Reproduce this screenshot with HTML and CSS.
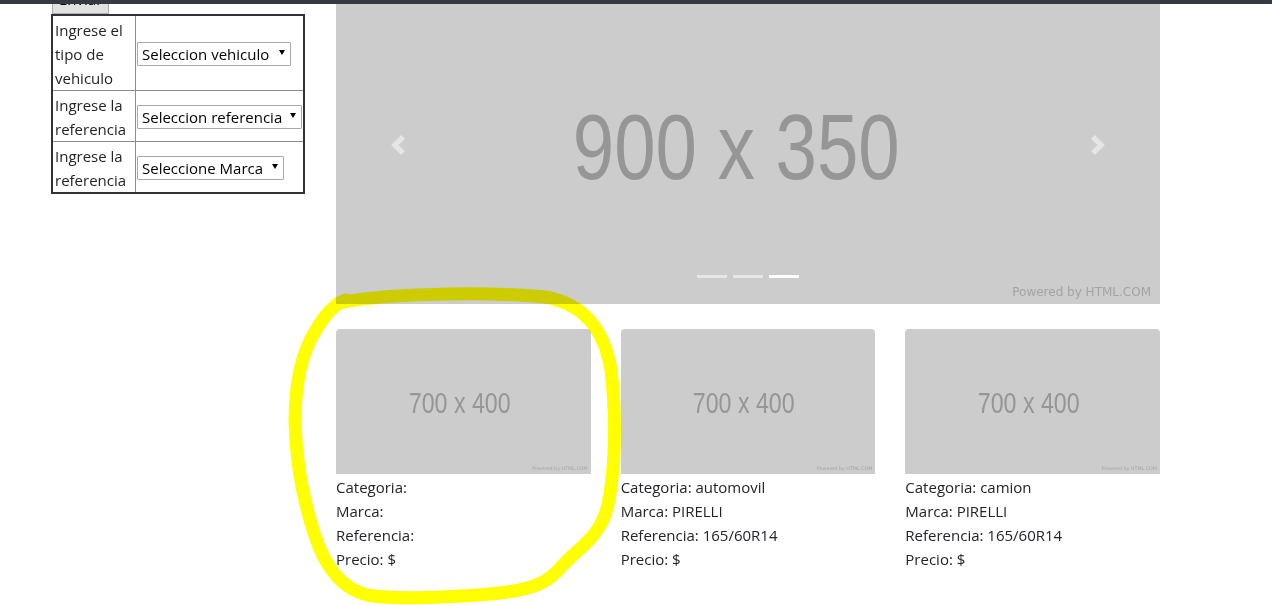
FILE: index.html
```html
<!DOCTYPE html>
<html>
<head>
    <title>Llantas</title>
    <link rel="stylesheet" href="styles.css">
</head>

<body>
    <div class="topbar"></div>

    <div class="page">
        <div class="side">
            <button type="button" class="send">Enviar</button>
            <table class="filters">
                <tr class="row-tall">
                    <td class="label">Ingrese el tipo de vehiculo</td>
                    <td><span class="pick"><select class="pick-vehiculo"><option>Seleccion vehiculo</option></select></span></td>
                </tr>
                <tr>
                    <td class="label">Ingrese la referencia</td>
                    <td><span class="pick"><select class="pick-referencia"><option>Seleccion referencia</option></select></span></td>
                </tr>
                <tr>
                    <td class="label">Ingrese la referencia</td>
                    <td><span class="pick"><select class="pick-marca"><option>Seleccione Marca</option></select></span></td>
                </tr>
            </table>
        </div>

        <div class="main">
            <div class="carousel">
                <div class="slide">
                    <span class="slide-text">900 x 350</span>
                    <span class="powered">Powered by HTML.COM</span>
                </div>
                <a class="control control-prev" href="#">
                    <svg width="20" height="20" viewBox="0 0 8 8"><path d="M5.25 0l-4 4 4 4 1.5-1.5-2.5-2.5 2.5-2.5-1.5-1.5z" fill="#fff"/></svg>
                </a>
                <a class="control control-next" href="#">
                    <svg width="20" height="20" viewBox="0 0 8 8"><path d="M2.75 0l-1.5 1.5 2.5 2.5-2.5 2.5 1.5 1.5 4-4-4-4z" fill="#fff"/></svg>
                </a>
                <ol class="indicators">
                    <li></li>
                    <li></li>
                    <li class="active"></li>
                </ol>
            </div>

            <div class="cards">
                <div class="card">
                    <div class="thumb">
                        <span class="thumb-text">700 x 400</span>
                        <span class="thumb-powered">Powered by HTML.COM</span>
                    </div>
                    <p>Categoria: </p>
                    <p>Marca: </p>
                    <p>Referencia: </p>
                    <p>Precio: $</p>
                </div>
                <div class="card">
                    <div class="thumb">
                        <span class="thumb-text">700 x 400</span>
                        <span class="thumb-powered">Powered by HTML.COM</span>
                    </div>
                    <p>Categoria: automovil</p>
                    <p>Marca: PIRELLI</p>
                    <p>Referencia: 165/60R14</p>
                    <p>Precio: $</p>
                </div>
                <div class="card">
                    <div class="thumb">
                        <span class="thumb-text">700 x 400</span>
                        <span class="thumb-powered">Powered by HTML.COM</span>
                    </div>
                    <p>Categoria: camion</p>
                    <p>Marca: PIRELLI</p>
                    <p>Referencia: 165/60R14</p>
                    <p>Precio: $</p>
                </div>
            </div>
        </div>
    </div>

    <!-- highlighter mark drawn over the first card -->
    <svg class="marker" width="1272" height="606" viewBox="0 0 1272 606">
        <path d="M338 303 C380 294 480 291 545 297 C585 304 604 330 611 370 C617 420 615 480 606 512 C598 538 576 550 562 566 C550 580 538 590 490 594 C440 598 395 600 367 595 C342 589 325 566 315 536 C303 500 296 462 295 422 C295 382 303 350 316 330 C325 314 333 306 345 300"
              fill="none" stroke="#ffff00" stroke-width="13" stroke-linecap="round" stroke-linejoin="round"/>
    </svg>
</body>
</html>
```

FILE: styles.css
```css
body {
    margin: 0;
    font-family: "Open Sans", "Noto Sans", sans-serif;
    font-size: 15px;
    line-height: 24px;
    color: #212529;
    background: #fff;
}

.topbar {
    position: fixed;
    top: 0;
    left: 0;
    right: 0;
    height: 4px;
    background-color: #343a40;
    z-index: 10;
}

/* page is scrolled a little, so the top is cut */
.page {
    display: flex;
    margin-top: -16px;
    padding-left: 51px;
}
.side {
    width: 285px;
    flex: none;
}
.main {
    width: 824px;
    flex: none;
}

.send {
    display: block;
    height: 30px;
    margin-left: 1px;
    padding: 0 6px;
    font-family: inherit;
    font-size: 15px;
    line-height: 24px;
    color: #000;
    background-color: #e1e1e1;
    border: 1px solid #adadad;
}

.filters {
    border-collapse: collapse;
    border: 2px solid #333;
}
.filters td {
    border: 1px solid #8c8c8c;
    padding: 1px;
    vertical-align: middle;
}
.filters td.label {
    width: 79px;
    padding: 2px 1px 0 2px;
    vertical-align: top;
}

.pick {
    position: relative;
    display: inline-block;
    vertical-align: middle;
}
.pick select {
    display: block;
    height: 24px;
    padding: 0 16px 0 4px;
    font-family: inherit;
    font-size: 15px;
    color: #000;
    background-color: #fff;
    border: 1px solid #a9a9a9;
    border-radius: 1px;
    -webkit-appearance: none;
    appearance: none;
}
.pick::after {
    content: "";
    position: absolute;
    right: 6px;
    top: 8px;
    border-top: 5px solid #000;
    border-left: 3px solid transparent;
    border-right: 3px solid transparent;
    pointer-events: none;
}
.pick-vehiculo {
    width: 154px;
}
.pick-referencia {
    width: 165px;
}
.pick-marca {
    width: 147px;
}

/* carousel */
.carousel {
    position: relative;
    height: 320px;
    background-color: #ccc;
    overflow: hidden;
}
.slide {
    position: relative;
    height: 100%;
    display: flex;
    align-items: center;
    justify-content: center;
}
.slide-text {
    margin-right: 23px;
    padding-top: 6px;
    font-family: "Liberation Sans", Arial, sans-serif;
    font-size: 93px;
    line-height: 1;
    color: #969696;
    transform: scaleX(0.8);
}
.powered {
    position: absolute;
    right: 9px;
    bottom: 5px;
    font-family: "DejaVu Sans", sans-serif;
    font-size: 12px;
    line-height: 14px;
    color: #a3a3a3;
}
.control {
    position: absolute;
    top: 0;
    bottom: 0;
    width: 15%;
    display: flex;
    align-items: center;
    justify-content: center;
    opacity: 0.5;
}
.control-prev {
    left: 0;
}
.control-next {
    right: 0;
}
.control svg {
    padding-top: 1px;
}
.indicators {
    position: absolute;
    left: 0;
    right: 0;
    bottom: 0;
    display: flex;
    justify-content: center;
    margin: 0 0 16px;
    padding: 0;
    list-style: none;
}
.indicators li {
    width: 30px;
    height: 3px;
    margin: 10px 3px;
    background-color: rgba(255, 255, 255, 0.5);
}
.indicators li.active {
    background-color: #fff;
}

/* product cards */
.cards {
    display: grid;
    grid-template-columns: repeat(3, 1fr);
    column-gap: 30px;
    margin-top: 25px;
}
.thumb {
    position: relative;
    height: 145px;
    margin-bottom: 1px;
    display: flex;
    align-items: center;
    justify-content: center;
    background-color: #ccc;
    border-radius: 4px 4px 0 0;
}
.thumb-text {
    margin-right: 8px;
    padding-top: 3px;
    font-family: "Liberation Sans", Arial, sans-serif;
    font-size: 29px;
    line-height: 1;
    color: #969696;
    transform: scaleX(0.8);
}
.thumb-powered {
    position: absolute;
    right: 3px;
    bottom: 2px;
    font-family: "DejaVu Sans", sans-serif;
    font-size: 4.8px;
    line-height: 6px;
    color: #a3a3a3;
}
.card p {
    margin: 0;
}

.marker {
    position: absolute;
    top: 0;
    left: 0;
    pointer-events: none;
    mix-blend-mode: multiply;
}
```
